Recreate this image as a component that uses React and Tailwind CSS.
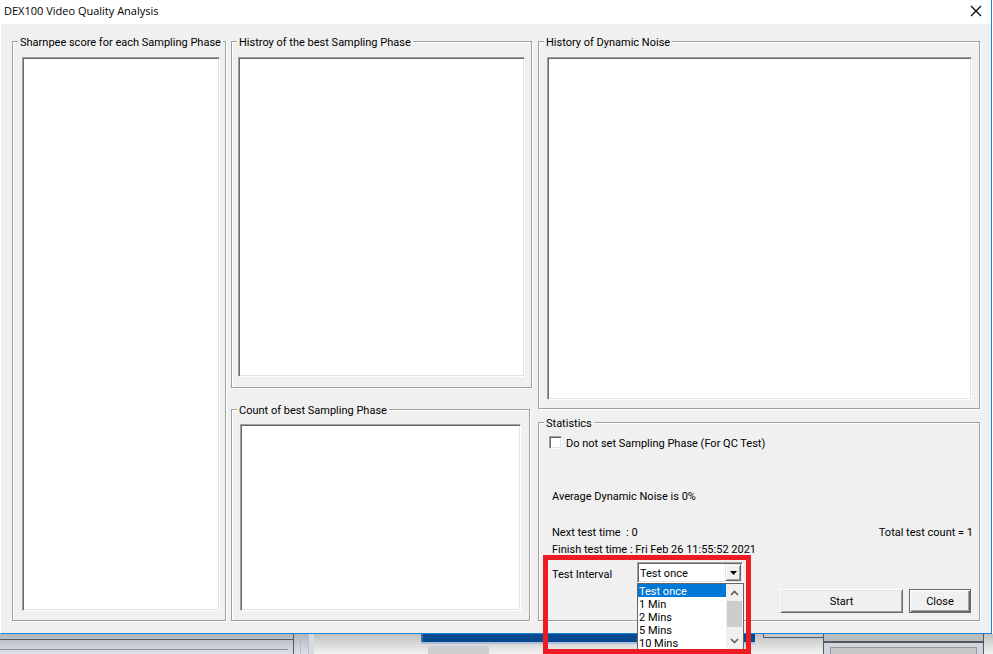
import React from "react";

const intervals = ["Test once", "1 Min", "2 Mins", "5 Mins", "10 Mins"];

function Group({ title, className = "", children }) {
  return (
    <fieldset
      className={`min-w-0 border border-[#a0a0a0] pl-[5px] shadow-[1px_1px_0_#fff,inset_1px_1px_0_#fff] ${className}`}
    >
      <legend className="h-[13px] bg-[#f0f0f0] px-[2px] leading-4 whitespace-nowrap">{title}</legend>
      {children}
    </fieldset>
  );
}

function ListBox({ label, className = "" }) {
  return (
    <div
      role="listbox"
      aria-label={label}
      className={`border border-t-[#a0a0a0] border-l-[#a0a0a0] border-r-white border-b-white bg-white shadow-[inset_1px_1px_0_#696969,inset_-1px_-1px_0_#e3e3e3] ${className}`}
    />
  );
}

function Chevron({ up }) {
  return (
    <svg viewBox="0 0 9 6" className="h-[6px] w-[9px]" fill="none" stroke="#606060" strokeWidth="1.6">
      <path d={up ? "M1 5 L4.5 1.5 L8 5" : "M1 1 L4.5 4.5 L8 1"} />
    </svg>
  );
}

function IntervalPicker() {
  return (
    <div className="relative flex h-[21px] items-center">
      <label htmlFor="interval" className="w-[85px] pt-1">Test Interval</label>
      <div className="relative w-[106px]">
        <select
          id="interval"
          className="block h-[21px] w-full appearance-none border border-t-[#a0a0a0] border-l-[#a0a0a0] border-r-white border-b-white bg-white pt-[2px] pl-[2px] shadow-[inset_1px_1px_0_#696969,inset_-1px_-1px_0_#e3e3e3] outline-none"
        >
          {intervals.map((t) => (
            <option key={t}>{t}</option>
          ))}
        </select>
        <span className="pointer-events-none absolute top-[2px] right-[2px] flex h-[17px] w-4 items-center justify-center border border-t-[#e3e3e3] border-l-[#e3e3e3] border-r-[#696969] border-b-[#696969] bg-[#f0f0f0] shadow-[inset_1px_1px_0_#fff,inset_-1px_-1px_0_#a0a0a0]">
          <svg viewBox="0 0 7 4" className="h-1 w-[7px]">
            <path d="M0 0H7L3.5 4Z" fill="#000" />
          </svg>
        </span>
        <div className="absolute top-[21px] left-0 z-10 flex h-[68px] w-[107px] overflow-hidden border border-[#646464] bg-white">
          <ul role="listbox" aria-label="Test Interval options" className="flex-1">
            {intervals.map((t, i) => (
              <li
                key={t}
                role="option"
                aria-selected={i === 0}
                className={`h-[13px] pt-px pl-px leading-[13px] ${i === 0 ? "bg-[#0078d7] text-white" : ""}`}
              >
                {t}
              </li>
            ))}
          </ul>
          <div className="flex w-[17px] flex-col items-center bg-[#f0f0f0] pt-[6px] pb-[6px]">
            <Chevron up />
            <div className="mt-[5px] mb-auto h-[26px] w-[15px] bg-[#cdcdcd]" />
            <Chevron />
          </div>
        </div>
      </div>
      <div className="pointer-events-none absolute -top-[7px] -left-[9px] z-20 h-[99px] w-[208px] border-[5px] border-[#ed1c24]" />
    </div>
  );
}

function Statistics() {
  return (
    <Group title="Statistics" className="flex-1 pr-[6px] pb-[7px]">
      <div className="flex flex-col pl-2 leading-4">
        <label className="mt-[6px] -ml-[3px] flex h-4 items-start gap-1 leading-[18px]">
          <input
            type="checkbox"
            className="mt-px size-[13px] appearance-none border border-t-[#a0a0a0] border-l-[#a0a0a0] border-r-white border-b-white bg-white shadow-[inset_1px_1px_0_#696969,inset_-1px_-1px_0_#e3e3e3]"
          />
          Do not set Sampling Phase (For QC Test)
        </label>
        <p className="mt-[38px] h-[14px]">Average Dynamic Noise is 0%</p>
        <div className="mt-[22px] flex h-[14px] justify-between">
          <p className="whitespace-pre">Next test time  : 0</p>
          <p>Total test count = 1</p>
        </div>
        <p className="mt-[3px] h-[14px]">Finish test time : Fri Feb 26 11:55:52 2021</p>
      </div>
      <div className="mt-[6px] flex justify-between pr-[2px] pl-2">
        <IntervalPicker />
        <div className="mt-[27px] flex gap-[6px]">
          <button className="h-6 w-[123px] border border-t-white border-l-white border-r-[#696969] border-b-[#696969] bg-[#f0f0f0] pt-[2px] shadow-[inset_1px_1px_0_#e3e3e3,inset_-1px_-1px_0_#a0a0a0]">
            Start
          </button>
          <button className="h-6 w-[62px] border border-[#696969] bg-[#f0f0f0] pt-[2px] shadow-[inset_1px_1px_0_#fff,inset_-1px_-1px_0_#696969,inset_-2px_-2px_0_#a0a0a0]">
            Close
          </button>
        </div>
      </div>
    </Group>
  );
}

function Backdrop() {
  return (
    <div className="flex h-5 bg-gradient-to-b from-[#c0c0c0] to-[#f2f2f2]">
      <div className="w-[294px] border-r border-[#555a5e] bg-gradient-to-b from-[#b0b5bd] to-[#dde0ea]">
        <div className="h-[6px] border-b border-[#555a5e]" />
        <div className="mr-[5px] h-[10px] border-b border-[#8c8f96]" />
      </div>
      <div className="w-5 border-r-[5px] border-[#d5dae4] bg-gradient-to-b from-[#b0b5bd] to-[#dde0ea]">
        <div className="ml-[6px] h-5 w-[9px] border-x border-[#bbbcc0]" />
      </div>
      <div className="ml-[107px] w-[334px]">
        <div className="h-2 border-l-2 border-[#3f6c9d] bg-[#084a8f]" />
        <div className="h-[2px] bg-[#a9bfdc]" />
        <div className="mt-[2px] ml-[7px] h-2 w-[61px] bg-[#cfcfd1]" />
      </div>
      <div className="ml-2 h-[4px] w-[60px] border-b border-l border-[#555a5e] bg-[#c3c8cf]" />
      <div className="w-[161px] border-x border-[#555a5e] bg-[#d0d5de]">
        <div className="h-[9px] border-b-2 border-[#555a5e] bg-[#b9bdbd]" />
        <div className="mx-[6px] mt-1 h-[7px] border border-b-0 border-[#999] bg-[#c8c8c8]" />
      </div>
      <div className="flex-1 bg-gradient-to-b from-[#c0c0c0] to-[#f4f4f4]" />
    </div>
  );
}

export default function App() {
  return (
    <div className="min-h-screen overflow-hidden bg-white font-[Roboto,'Liberation_Sans',sans-serif] text-[11px] leading-[14px] text-black">
      <main className="mr-px border border-t-0 border-[#1883d7] border-l-white bg-[#f0f0f0]">
        <header className="flex h-6 items-center justify-between bg-white pr-[9px] pb-[2px] pl-[3px]">
          <h1 className="font-['Open_Sans','Noto_Sans',sans-serif] text-[11px] leading-4">DEX100 Video Quality Analysis</h1>
          <button aria-label="Close window" className="flex size-3 items-center justify-center">
            <svg viewBox="0 0 12 12" className="size-3" stroke="#000" strokeWidth="1.2">
              <path d="M1 1L11 11M11 1L1 11" />
            </svg>
          </button>
        </header>
        <div className="grid grid-cols-[214fr_302fr_442fr] gap-[5px] px-[11px] pt-[11px] pb-3">
          <Group title="Sharnpee score for each Sampling Phase" className="pt-[9px] pr-[5px] pb-[9px]">
            <ListBox label="Sharpness scores" className="ml-1 h-[554px]" />
          </Group>
          <div className="flex flex-col gap-[15px]">
            <Group title="Histroy of the best Sampling Phase" className="mr-px pt-[9px] pr-[6px] pb-[10px]">
              <ListBox label="Best phase history" className="ml-px h-[320px]" />
            </Group>
            <Group title="Count of best Sampling Phase" className="mr-[3px] pt-2 pr-2 pb-[9px]">
              <ListBox label="Best phase counts" className="ml-[3px] h-[187px]" />
            </Group>
          </div>
          <div className="flex flex-col gap-[7px]">
            <Group title="History of Dynamic Noise" className="pt-[9px] pr-[7px] pb-2">
              <ListBox label="Dynamic noise history" className="ml-[3px] h-[343px]" />
            </Group>
            <Statistics />
          </div>
        </div>
      </main>
      <Backdrop />
    </div>
  );
}
